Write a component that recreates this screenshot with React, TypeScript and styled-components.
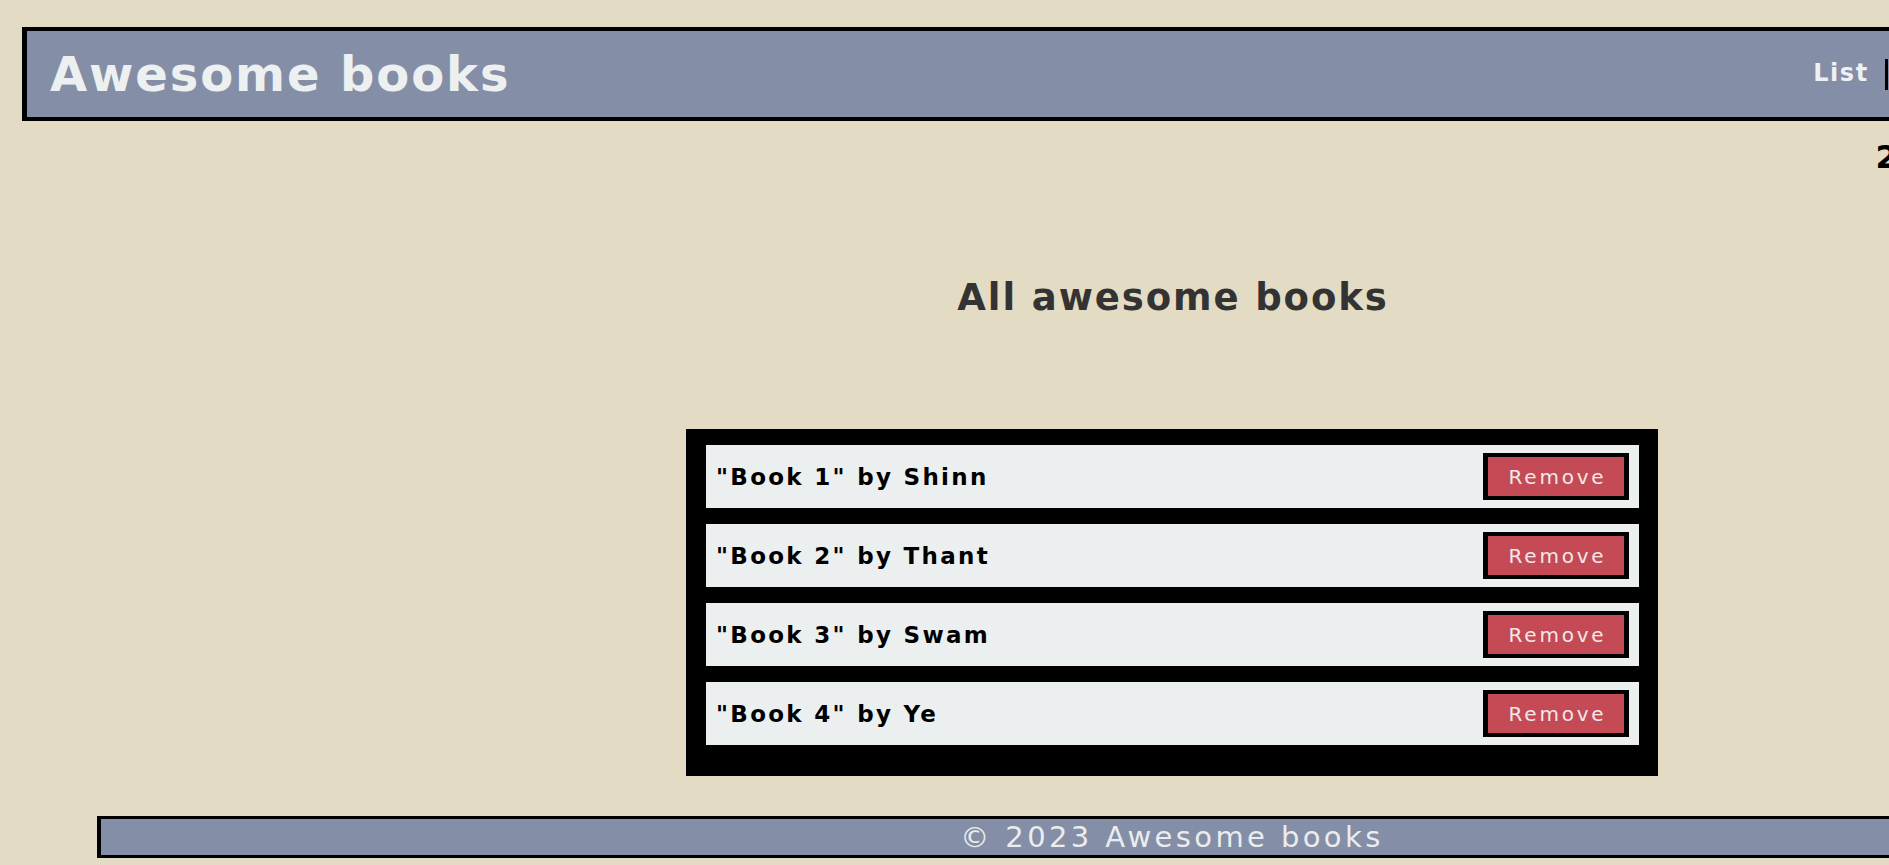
import React from "react";
import styled, { createGlobalStyle } from "styled-components";

const GlobalStyle = createGlobalStyle`
  html, body {
    margin: 0;
    padding: 0;
    overflow: hidden;
  }
  body {
    background: #e3dbc3;
    font-family: "DejaVu Sans", "Liberation Sans", sans-serif;
  }
`;

const Page = styled.div`
  width: 2344px;
  padding-top: 27px;
  display: flex;
  flex-direction: column;
`;

const Header = styled.header`
  margin: 0 122px 0 22px;
  height: 94px;
  box-sizing: border-box;
  border: 4px solid #000;
  border-left-width: 5px;
  border-right-width: 5px;
  background: #848ea6;
  display: flex;
  align-items: center;
  justify-content: space-between;
  padding: 0 20px 0 23px;
`;

const Logo = styled.h1`
  margin: 0;
  font-size: 48px;
  font-weight: 700;
  letter-spacing: 1.9px;
  color: #ecf0f1;
`;

const Nav = styled.ul`
  list-style: none;
  display: flex;
  margin: 0;
  padding: 0;
`;

const NavItem = styled.li<{ $first?: boolean }>`
  padding: 0 16px;
  line-height: 28px;
  border-left: ${(p) => (p.$first ? "none" : "3px solid #000")};
`;

const NavLink = styled.a`
  color: #eef1f3;
  font-size: 24px;
  font-weight: 700;
  letter-spacing: 1.5px;
  text-decoration: none;
`;

const DateRow = styled.p`
  margin: 18px 247px 0 0;
  text-align: right;
  font-size: 32px;
  line-height: 36px;
  font-weight: 700;
  letter-spacing: 2px;
  color: #000;
`;

const Heading = styled.h2`
  margin: 102px 0 0;
  padding-left: 2px;
  text-align: center;
  font-size: 37px;
  line-height: 42px;
  font-weight: 700;
  letter-spacing: 1.9px;
  color: #333;
`;

const BookList = styled.ul`
  list-style: none;
  width: 972px;
  box-sizing: border-box;
  margin: 110px auto 0;
  padding: 16px 19px 31px 20px;
  background: #000;
  display: flex;
  flex-direction: column;
  gap: 16px;
`;

const BookRow = styled.li`
  height: 63px;
  box-sizing: border-box;
  padding: 0 10px;
  background: #ebeff0;
  display: flex;
  align-items: center;
  justify-content: space-between;
`;

const BookTitle = styled.span`
  font-size: 23px;
  font-weight: 700;
  letter-spacing: 2.3px;
  color: #000;
`;

const RemoveButton = styled.button`
  width: 146px;
  height: 47px;
  box-sizing: border-box;
  border: 4px solid #000;
  border-left-width: 5px;
  border-right-width: 5px;
  background: #c44b56;
  color: #f2e8e9;
  font-family: "DejaVu Sans", "Liberation Sans", sans-serif;
  font-size: 20px;
  letter-spacing: 2.8px;
  padding: 0 0 0 3px;
  cursor: pointer;
`;

const Footer = styled.footer`
  margin: 40px 97px 0;
  height: 42px;
  box-sizing: border-box;
  border: 3px solid #000;
  border-left-width: 4px;
  border-right-width: 4px;
  background: #848ea6;
  text-align: center;
  padding-left: 0;
  font-size: 29px;
  line-height: 36px;
  letter-spacing: 3.4px;
  color: #e9edef;
`;

const books = [
  { title: "Book 1", author: "Shinn" },
  { title: "Book 2", author: "Thant" },
  { title: "Book 3", author: "Swam" },
  { title: "Book 4", author: "Ye" },
];

export default function App() {
  return (
    <>
      <GlobalStyle />
      <Page>
        <Header>
          <Logo>Awesome books</Logo>
          <Nav>
            <NavItem $first>
              <NavLink href="#list">List</NavLink>
            </NavItem>
            <NavItem>
              <NavLink href="#add">Add new</NavLink>
            </NavItem>
            <NavItem>
              <NavLink href="#contact">Contact</NavLink>
            </NavItem>
          </Nav>
        </Header>
        <DateRow>2023/03/20</DateRow>
        <Heading>All awesome books</Heading>
        <BookList>
          {books.map((b) => (
            <BookRow key={b.title}>
              <BookTitle>
                "{b.title}" by {b.author}
              </BookTitle>
              <RemoveButton type="button">Remove</RemoveButton>
            </BookRow>
          ))}
        </BookList>
        <Footer>© 2023 Awesome books</Footer>
      </Page>
    </>
  );
}
